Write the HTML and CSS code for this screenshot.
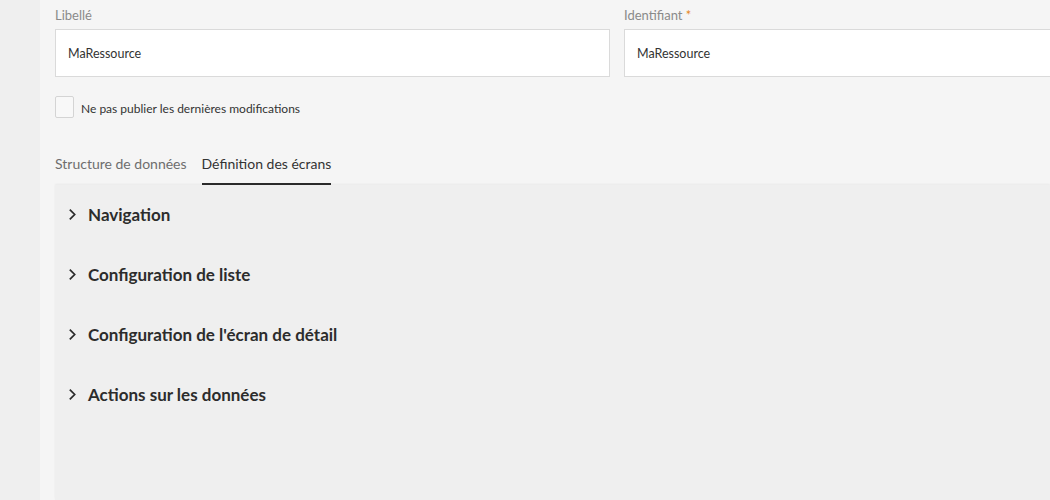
FILE: index.html
```html
<!DOCTYPE html>
<html lang="fr">
<head>
    <meta charset="UTF-8">
    <meta name="viewport" content="width=device-width, initial-scale=1.0">
    <title>MaRessource</title>
    <link rel="stylesheet" href="styles.css">
</head>
<body>
    <div class="layout">
        <div class="sidebar"></div>
        <div class="content">
            <div class="fields">
                <div class="field">
                    <label>Libellé</label>
                    <input type="text" value="MaRessource">
                </div>
                <div class="field">
                    <label>Identifiant <span class="required">*</span></label>
                    <input type="text" value="MaRessource">
                </div>
            </div>
            <div class="check-row">
                <span class="checkbox"></span>
                <span>Ne pas publier les dernières modifications</span>
            </div>
            <div class="tabs">
                <div class="tab">Structure de données</div>
                <div class="tab active">Définition des écrans</div>
            </div>
            <div class="panel">
                <div class="section">
                    <svg class="chevron" viewBox="0 0 8 12"><path d="M1.5 1.5 L6 6 L1.5 10.5"/></svg>
                    Navigation
                </div>
                <div class="section">
                    <svg class="chevron" viewBox="0 0 8 12"><path d="M1.5 1.5 L6 6 L1.5 10.5"/></svg>
                    Configuration de liste
                </div>
                <div class="section">
                    <svg class="chevron" viewBox="0 0 8 12"><path d="M1.5 1.5 L6 6 L1.5 10.5"/></svg>
                    Configuration de l'écran de détail
                </div>
                <div class="section">
                    <svg class="chevron" viewBox="0 0 8 12"><path d="M1.5 1.5 L6 6 L1.5 10.5"/></svg>
                    Actions sur les données
                </div>
            </div>
        </div>
    </div>
</body>
</html>
```

FILE: styles.css
```css
* {
    box-sizing: border-box;
    margin: 0;
    padding: 0;
}
body {
    font-family: Lato, "Open Sans", sans-serif;
    background-color: #f5f5f5;
    color: #2c2c2c;
    overflow: hidden;
    height: 100vh;
}
.layout {
    display: flex;
    height: 100vh;
}
.sidebar {
    width: 40px;
    flex: 0 0 40px;
    background-color: #efefef;
}
.content {
    flex: 1;
    padding: 7px 0 0 15px;
    display: flex;
    flex-direction: column;
    min-width: 0;
    overflow: hidden;
}
.fields {
    display: flex;
    gap: 14px;
}
.field {
    display: flex;
    flex-direction: column;
    flex: 0 0 555px;
}
.field label {
    font-size: 13px;
    color: #8a8a8a;
    height: 22px;
    line-height: 16px;
}
.required {
    color: #e68619;
}
.field input {
    height: 48px;
    border: 1px solid #dadada;
    background-color: #fff;
    padding: 0 12px;
    font-family: inherit;
    font-size: 12.5px;
    color: #333;
    outline: none;
}
.check-row {
    display: flex;
    align-items: center;
    gap: 7px;
    margin-top: 19px;
    font-size: 12px;
    color: #333;
}
.check-row span:last-child {
    padding-top: 3px;
}
.checkbox {
    width: 19px;
    height: 22px;
    border: 1px solid #d4d4d4;
    border-radius: 2px;
    background-color: #f8f8f8;
}
.tabs {
    display: flex;
    gap: 15px;
    margin-top: 37px;
}
.tab {
    font-size: 14px;
    color: #6e6e6e;
    padding-bottom: 11px;
    border-bottom: 2px solid transparent;
}
.tab.active {
    color: #333;
    border-bottom-color: #2c2c2c;
}
.panel {
    flex: 1;
    background-color: #efefef;
    box-shadow: 0 -1px 2px rgba(0, 0, 0, 0.05);
    padding-top: 14px;
}
.section {
    display: flex;
    align-items: center;
    gap: 11px;
    height: 60px;
    padding-left: 13px;
    padding-bottom: 29px;
    font-size: 17px;
    font-weight: bold;
    color: #2c2c2c;
}
.chevron {
    width: 9px;
    height: 13px;
    fill: none;
    stroke: #2c2c2c;
    stroke-width: 1.6;
}
```
